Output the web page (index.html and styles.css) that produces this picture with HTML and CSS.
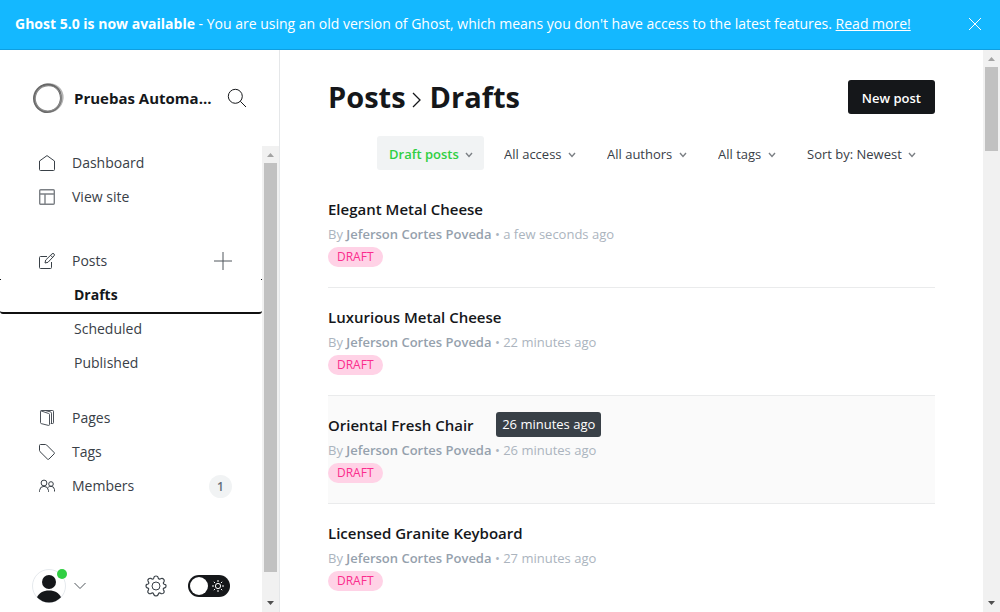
FILE: index.html
```html
<!DOCTYPE html>
<html lang="en">
<head>
<meta charset="utf-8">
<meta name="viewport" content="width=device-width, initial-scale=1">
<title>Posts - Pruebas</title>
<link rel="stylesheet" href="styles.css">
</head>
<body>
<div class="banner" role="status">
  <p class="banner-text"><strong>Ghost 5.0 is now available</strong> - You are using an old version of Ghost, which means you don't have access to the latest features. <a href="#">Read more!</a></p>
  <button class="icon-button banner-close" aria-label="Close"><svg width="14" height="14" viewBox="0 0 14 14"><path d="M1 1l12 12M13 1L1 13"/></svg></button>
</div>
<div class="app">
  <nav class="sidebar" aria-label="Main">
    <header class="site">
      <svg class="site-logo" width="32" height="32" viewBox="0 0 32 32">
        <ellipse cx="16.500" cy="15.600" rx="13.600" ry="14.400" stroke="#b4b4b4" stroke-width="1.800" transform="rotate(50 16 16)"/>
        <ellipse cx="15.600" cy="16.400" rx="13.400" ry="13.800" stroke="#6a6a6a" stroke-width="2" transform="rotate(20 16 16)"/>
        <ellipse cx="16" cy="16.300" rx="13" ry="12.600" stroke="#8a8a8a" stroke-width="1.200" transform="rotate(-30 16 16)"/>
        <path d="M8 4.500Q15 1 22 4t6 8" stroke="#666" stroke-width="1"/>
      </svg>
      <span class="site-name">Pruebas Automa...</span>
      <button class="icon-button search" aria-label="Search"><svg width="20" height="20" viewBox="0 0 20 20"><circle cx="8.300" cy="8.300" r="7"/><path d="M13.300 13.300l5.700 5.700"/></svg></button>
    </header>
    <div class="sidebar-body">
      <div class="sidebar-column">
        <ul class="menu">
          <li><a href="#"><svg width="16" height="16" viewBox="0 0 16 16"><path d="M.5 6L8 .6 15.500 6v8.500a1 1 0 0 1-1 1h-13a1 1 0 0 1-1-1z"/></svg>Dashboard</a></li>
          <li><a href="#"><svg class="soft" width="16" height="16" viewBox="0 0 16 16"><rect x=".7" y=".7" width="14.600" height="14.600" rx="1"/><path d="M.5 5h15M6 5v10.500"/></svg>View site</a></li>
        </ul>
        <ul class="menu menu-posts">
          <li class="with-action"><a href="#"><svg width="16" height="16" viewBox="0 0 16 16"><path d="M8 3.500H1.500a1 1 0 0 0-1 1v10a1 1 0 0 0 1 1h10a1 1 0 0 0 1-1V9M6 10l.7-3L13 .9a1.400 1.400 0 0 1 2 2L9 9.300zM11.600 2.300l2 2"/></svg>Posts</a><button class="icon-button add" aria-label="New post"><svg width="18" height="18" viewBox="0 0 18 18"><path d="M9 0v18M0 9h18"/></svg></button></li>
          <li class="sub current"><a href="#" aria-current="page">Drafts</a></li>
          <li class="sub"><a href="#">Scheduled</a></li>
          <li class="sub"><a href="#">Published</a></li>
        </ul>
        <ul class="menu menu-content">
          <li><a href="#"><svg width="16" height="16" viewBox="0 0 16 16"><path d="M1.500 1.300q0-.8.800-.8h11.400q.8 0 .8.800v11.400q0 .8-.8.800h-2M1.500 1.300v11.300q0 .8.700 1l7.200 1.800q1.100.2 1.100-.8V4.500q0-.8-.8-1L2 .9M6.500.6l4.700 1.200q1.300.4 1.300 1.400v10.300" stroke-width=".9"/></svg>Pages</a></li>
          <li><a href="#"><svg width="16" height="16" viewBox="0 0 16 16"><path d="M.5 1.500q0-1 1-1h5q.6 0 1 .4l7.600 7.600q.7.700 0 1.400l-5.200 5.200q-.7.700-1.400 0L.9 7.500q-.4-.4-.4-1z"/></svg>Tags</a></li>
          <li class="with-action"><a href="#"><svg width="16" height="16" viewBox="0 0 16 16"><circle cx="5" cy="5" r="2.900"/><circle cx="12" cy="6" r="2.300"/><path d="M.5 13.800V12.500Q.9 8.400 5 8.300q4.100.1 4.500 4.200v1.300M9.200 9.300q1-1 2.800-1 3 0 3.500 3.200v2"/></svg>Members</a><span class="count">1</span></li>
        </ul>
        <footer class="user-bar">
          <button class="icon-button user" aria-label="Account">
            <span class="avatar"><svg width="34" height="34" viewBox="0 0 34 34"><circle cx="17" cy="17" r="16.500" fill="#fff" stroke="#e5e9ed"/><circle cx="17" cy="13" r="7" fill="#15171a" stroke="none"/><path d="M5 28.300C7 24 11 21.500 17 21.500s10 2.500 12 6.800A16.500 16.500 0 0 1 5 28.300z" fill="#15171a" stroke="none"/></svg><span class="online"></span></span>
            <svg class="user-arrow" width="12" height="8" viewBox="0 0 12 8"><path d="M.5 1L6 6.500 11.500 1"/></svg>
          </button>
          <a class="settings" href="#" aria-label="Settings"><svg width="22" height="22" viewBox="0 0 22 22"><circle cx="11" cy="11" r="4"/><path d="M9 2.200Q9.200 1 11 1t2 1.200l.4 1.200q.6 1.100 1.800.6l1.100-.5q1.300-.4 2.300.7 1 1 .5 2.200l-.6 1.200q-.5 1.200.7 1.700l1.100.4Q21 9.600 21 11t-.8 1.600l-1.300.5q-1 .5-.5 1.600l.7 1.200q.4 1.100-.6 2.200-1.100 1-2.300.5l-1.200-.6q-1-.4-1.500.7L13 19.900Q12.400 21 11 21t-2-1.100l-.5-1.200Q8 17.600 6.900 18l-1.200.6q-1.200.5-2.200-.5-1.100-1-.6-2.200l.6-1.200q.5-1.100-.5-1.600l-1.200-.5Q1 12.200 1 11t.8-1.600L3.100 9q1.100-.5.500-1.700L3 6.100q-.5-1.100.5-2.100 1.100-1.100 2.300-.6L7 4q1.100.4 1.600-.6z" stroke-width="1.200"/></svg></a>
          <label class="night"><input type="checkbox" aria-label="Night shift"><svg width="14" height="14" viewBox="0 0 14 14"><circle cx="7" cy="7" r="2.600"/><path d="M7 1v2M7 11v2M1 7h2M11 7h2M2.800 2.800l1.300 1.300M9.900 9.900l1.300 1.300M2.800 11.200l1.300-1.300M9.900 4.100l1.300-1.300"/></svg></label>
        </footer>
      </div>
      <div class="scrollbar scrollbar-menu" aria-hidden="true"><span class="arrow-up"></span><span class="thumb"></span><span class="arrow-down"></span></div>
    </div>
  </nav>
  <main class="main">
    <div class="content">
      <header class="page-head">
        <h1><a href="#">Posts</a><svg width="12" height="16" viewBox="0 0 12 16"><path d="M1 1l7 7-7 7" stroke-width="1.300"/></svg>Drafts</h1>
        <button class="new-post">New post</button>
      </header>
      <div class="filters">
        <label class="filter active"><select aria-label="Type"><option>Draft posts</option></select><svg width="8" height="6" viewBox="0 0 8 6"><path d="M1 1l3 3.500L7 1"/></svg></label>
        <label class="filter"><select aria-label="Access"><option>All access</option></select><svg width="8" height="6" viewBox="0 0 8 6"><path d="M1 1l3 3.500L7 1"/></svg></label>
        <label class="filter"><select aria-label="Author"><option>All authors</option></select><svg width="8" height="6" viewBox="0 0 8 6"><path d="M1 1l3 3.500L7 1"/></svg></label>
        <label class="filter"><select aria-label="Tag"><option>All tags</option></select><svg width="8" height="6" viewBox="0 0 8 6"><path d="M1 1l3 3.500L7 1"/></svg></label>
        <label class="filter"><select aria-label="Order"><option>Sort by: Newest</option></select><svg width="8" height="6" viewBox="0 0 8 6"><path d="M1 1l3 3.500L7 1"/></svg></label>
      </div>
      <ol class="posts">
        <li class="post"><h2><a href="#">Elegant Metal Cheese</a></h2><p>By <b>Jeferson Cortes Poveda</b> • <time>a few seconds ago</time></p><span class="badge">DRAFT</span></li>
        <li class="post"><h2><a href="#">Luxurious Metal Cheese</a></h2><p>By <b>Jeferson Cortes Poveda</b> • <time>22 minutes ago</time></p><span class="badge">DRAFT</span></li>
        <li class="post hovered"><h2><a href="#">Oriental Fresh Chair</a></h2><p>By <b>Jeferson Cortes Poveda</b> • <time>26 minutes ago<span class="tooltip" role="tooltip">26 minutes ago</span></time></p><span class="badge">DRAFT</span></li>
        <li class="post"><h2><a href="#">Licensed Granite Keyboard</a></h2><p>By <b>Jeferson Cortes Poveda</b> • <time>27 minutes ago</time></p><span class="badge">DRAFT</span></li>
      </ol>
    </div>
    <div class="scrollbar scrollbar-main" aria-hidden="true"><span class="arrow-up"></span><span class="thumb"></span><span class="arrow-down"></span></div>
  </main>
</div>
</body>
</html>
```
FILE: styles.css
```css
* { box-sizing: border-box; }

body {
  display: flex;
  flex-direction: column;
  height: 100vh;
  margin: 0;
  overflow: hidden;
  background: #fff;
  color: #15171a;
  font: 13px/20px "Segoe UI", "Open Sans", "Noto Sans", sans-serif;
}

h1, h2, p, ul, ol { margin: 0; padding: 0; }
ul, ol { list-style: none; }
a { color: inherit; text-decoration: none; }
svg { display: block; flex: none; fill: none; stroke: currentColor; }
button, select { font: inherit; color: inherit; }

.icon-button {
  display: flex;
  align-items: center;
  padding: 0;
  border: 0;
  background: none;
}

/* Upgrade banner */
.banner {
  display: flex;
  flex: none;
  align-items: center;
  justify-content: space-between;
  height: 50px;
  padding: 0 18px 2px 15px;
  border-bottom: 1px solid #0f9fe0;
  background: #14b8ff;
  color: #fff;
}
.banner-text { font-size: 14px; white-space: nowrap; }
.banner a { text-decoration: underline; }

.app { display: flex; flex: 1; min-height: 0; }

/* Sidebar */
.sidebar {
  display: flex;
  flex: none;
  flex-direction: column;
  width: 280px;
  border-right: 1px solid #e5e7e9;
}
.site {
  display: flex;
  flex: none;
  align-items: center;
  height: 96px;
  padding: 0 32px;
}
.site-name {
  flex: 1;
  min-width: 0;
  margin-left: 10px;
  font-size: 15px;
  font-weight: 700;
  white-space: nowrap;
}
.sidebar-body { display: flex; flex: 1; min-height: 0; }
.sidebar-column {
  display: flex;
  flex: 1;
  flex-direction: column;
  min-width: 0;
}
.menu { color: #394047; font-size: 14px; }
.menu li { display: flex; align-items: center; height: 34px; }
.menu a {
  display: flex;
  flex: 1;
  align-items: center;
  gap: 17px;
  padding-left: 39px;
}
.menu .soft { color: #7c8085; stroke-width: 1.4px; }
.menu-posts { margin-top: 30px; }
.menu-content { margin-top: 21px; }
.menu .sub a { padding-left: 74px; }
.with-action { padding-right: 30px; }
.add { color: #50565c; }

.menu .current {
  position: relative;
  color: #15171a;
  font-weight: 700;
}
.current::before,
.current::after {
  position: absolute;
  right: 0;
  left: 0;
  content: "";
  pointer-events: none;
}
.current::before {
  top: 1px;
  height: 1px;
  border: solid #15171a;
  border-width: 0 1px;
}
.current::after {
  top: 0;
  bottom: -2px;
  border-bottom: 2px solid #101010;
  border-radius: 3px;
}

.count {
  min-width: 23px;
  border-radius: 12px;
  background: #f1f3f4;
  color: #626d79;
  font-size: 12px;
  font-weight: 600;
  line-height: 23px;
  text-align: center;
}

.user-bar {
  display: flex;
  align-items: center;
  height: 52px;
  margin-top: auto;
  padding: 0 32px;
}
.user { gap: 8px; margin-right: auto; }
.avatar { position: relative; }
.online {
  position: absolute;
  top: 0;
  right: -1px;
  width: 10px;
  height: 10px;
  border-radius: 50%;
  background: #30cf43;
}
.user-arrow { color: #50565c; }
.settings { margin-right: 21px; color: #394047; }
.night { display: grid; align-items: center; color: #fff; }
.night input {
  display: flex;
  grid-area: 1 / 1;
  align-items: center;
  width: 42px;
  height: 22px;
  margin: 0;
  padding: 0 2px;
  appearance: none;
  border-radius: 11px;
  background: #15171a;
}
.night input::before {
  width: 18px;
  height: 18px;
  border-radius: 50%;
  background: #fff;
  content: "";
}
.night svg { grid-area: 1 / 1; justify-self: end; margin-right: 5px; z-index: 1; }

/* Scroll tracks */
.scrollbar {
  display: flex;
  flex: none;
  flex-direction: column;
  align-items: center;
  width: 17px;
  background: #f1f1f1;
}
.arrow-up, .arrow-down {
  flex: none;
  width: 7px;
  height: 4px;
  margin: 7px 0 6px;
  background: #a3a3a3;
  clip-path: polygon(50% 0, 100% 100%, 0 100%);
}
.arrow-down {
  margin: auto 0 7px;
  background: #505050;
  clip-path: polygon(0 0, 100% 0, 50% 100%);
}
.thumb { width: 13px; background: #c1c1c1; }
.scrollbar-menu .thumb { height: 91%; max-height: calc(100% - 57px); }
.scrollbar-main .thumb { height: 15%; }

/* Posts */
.main { display: flex; flex: 1; min-width: 0; }
.content { flex: 1; min-width: 0; padding: 0 48px; overflow: hidden; }
.page-head {
  display: flex;
  align-items: center;
  justify-content: space-between;
  height: 86px;
  padding-top: 8px;
}
h1 {
  display: flex;
  align-items: center;
  gap: 6px;
  font-size: 29px;
  font-weight: 700;
  line-height: 40px;
}
h1 svg { margin-top: 6px; }
.new-post {
  height: 34px;
  padding: 2px 14px 0;
  border: 0;
  border-radius: 3px;
  background: #15171a;
  color: #fff;
  font-weight: 600;
}
.filters {
  display: flex;
  justify-content: flex-end;
  gap: 8px;
  padding-right: 8px;
  color: #394047;
}
.filter { display: grid; align-items: center; border-radius: 3px; }
.filter select {
  grid-area: 1 / 1;
  height: 34px;
  padding: 2px 25px 0 12px;
  appearance: none;
  border: 0;
  background: none;
}
.filter svg {
  grid-area: 1 / 1;
  justify-self: end;
  margin: 3px 11px 0 0;
  color: #7c8085;
  stroke-width: 1.4px;
  pointer-events: none;
}
.filter.active { background: #f1f3f4; }
.filter.active select { color: #30cf43; font-weight: 600; }
.posts { margin-top: 9px; }
.post {
  height: 108px;
  padding-top: 18px;
  border-top: 1px solid #eaebec;
}
.post:first-child { border-color: transparent; }
.post h2 { font-size: 15px; font-weight: 600; line-height: 22px; }
.post p { margin-top: 3px; color: #abb4be; line-height: 22px; }
.post b { color: #95a1ad; font-weight: 600; }
.hovered { background: #fafafa; }
.badge {
  display: block;
  width: fit-content;
  margin-top: 2px;
  padding: 0 9px;
  border-radius: 10px;
  background: #ffd2e6;
  color: #fb2d8d;
  font-size: 12px;
  line-height: 20px;
}
time { position: relative; }
.tooltip {
  position: absolute;
  bottom: 22px;
  left: -7px;
  padding: 0 6px;
  border-radius: 3px;
  background: #394047;
  color: #fff;
  line-height: 25px;
  white-space: nowrap;
}
```
